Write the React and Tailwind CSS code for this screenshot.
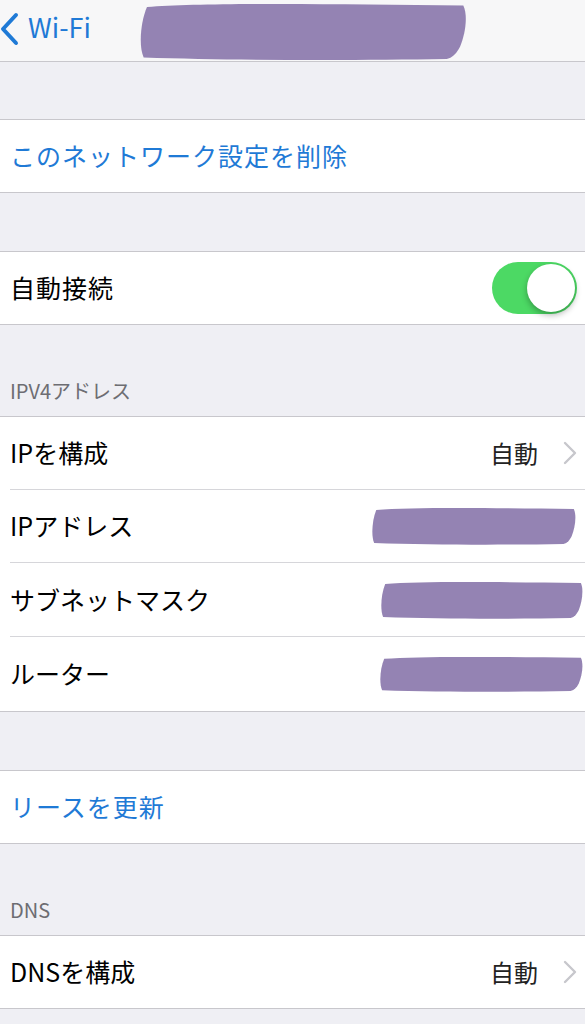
import React from 'react';

const font = { fontFamily: '"Noto Sans CJK JP", "Noto Sans", sans-serif' };

const Scribble = ({ className }) => (
  <svg className={className} viewBox="0 0 200 40" preserveAspectRatio="none">
    <path
      d="M6 4 C40 1 120 2 196 3 C199 10 197 22 194 30 C192 34 190 37 186 38 C130 39 60 39 4 37 C1 30 2 14 6 4 Z"
      fill="#9483b3"
    />
  </svg>
);

const Chevron = () => (
  <svg width="14" height="24" viewBox="0 0 14 24" className="shrink-0">
    <path d="M2 2 L12 12 L2 22" fill="none" stroke="#c7c7cc" strokeWidth="2.4" strokeLinecap="round" strokeLinejoin="round" />
  </svg>
);

const Toggle = () => (
  <div className="relative w-[85px] h-[52px] rounded-full bg-[#4cd964]">
    <div className="absolute right-[2px] top-[2px] w-[48px] h-[48px] rounded-full bg-white shadow-[0_3px_6px_rgba(0,0,0,0.3)]" />
  </div>
);

const Row = ({ children, last, h = 'h-[73px]' }) => (
  <div className="bg-white pl-[10px]">
    <div className={`${h} flex items-center pr-[8px] ${last ? '' : 'border-b border-[#d6d6da]'}`}>
      {children}
    </div>
  </div>
);

const Group = ({ children }) => (
  <div className="border-y border-[#c8c7cc] bg-white">{children}</div>
);

const Header = ({ label, h }) => (
  <div className={`${h} flex items-end pl-[10px] pb-[10px] text-[20px] text-[#6d6d72]`}>{label}</div>
);

export default function App() {
  return (
    <div className="w-[585px] h-[1024px] overflow-hidden bg-[#efeff4]" style={font}>
      <div className="h-[62px] bg-[#f7f7f8] border-b border-[#c8c7cc] flex items-center relative">
        <svg width="20" height="34" viewBox="0 0 20 34" className="mb-[4px]">
          <path d="M16 3 L3 17 L16 31" fill="none" stroke="#1f7ad6" strokeWidth="4" strokeLinecap="round" strokeLinejoin="round" />
        </svg>
        <span className="ml-[8px] mb-[6px] text-[27px] text-[#1f7ad6]">Wi-Fi</span>
        <Scribble className="absolute left-[137px] top-[1px] w-[333px] h-[61px]" />
      </div>

      <div className="h-[57px]" />
      <Group>
        <Row last h="h-[72px]">
          <span className="text-[25px] text-[#1f7ad6] tracking-[1px]">このネットワーク設定を削除</span>
        </Row>
      </Group>

      <div className="h-[58px]" />
      <Group>
        <Row last h="h-[72px]">
          <span className="text-[25px] text-black flex-1 tracking-[1px]">自動接続</span>
          <Toggle />
        </Row>
      </Group>

      <Header label="IPV4アドレス" h="h-[91px]" />
      <Group>
        <Row>
          <span className="text-[25px] text-black flex-1">IPを構成</span>
          <span className="text-[24px] text-[#222] mr-[25px]">自動</span>
          <Chevron />
        </Row>
        <Row>
          <span className="text-[25px] text-black flex-1">IPアドレス</span>
          <Scribble className="w-[208px] h-[40px] mr-[-1px]" />
        </Row>
        <Row h="h-[74px]">
          <span className="text-[25px] text-black flex-1">サブネットマスク</span>
          <Scribble className="w-[206px] h-[40px] mr-[-8px]" />
        </Row>
        <Row last h="h-[74px]">
          <span className="text-[25px] text-black flex-1">ルーター</span>
          <Scribble className="w-[207px] h-[38px] mr-[-8px]" />
        </Row>
      </Group>

      <div className="h-[58px]" />
      <Group>
        <Row last h="h-[72px]">
          <span className="text-[25px] text-[#1f7ad6] tracking-[1px]">リースを更新</span>
        </Row>
      </Group>

      <Header label="DNS" h="h-[91px]" />
      <Group>
        <Row last h="h-[72px]">
          <span className="text-[25px] text-black flex-1">DNSを構成</span>
          <span className="text-[24px] text-[#222] mr-[25px]">自動</span>
          <Chevron />
        </Row>
      </Group>
    </div>
  );
}
